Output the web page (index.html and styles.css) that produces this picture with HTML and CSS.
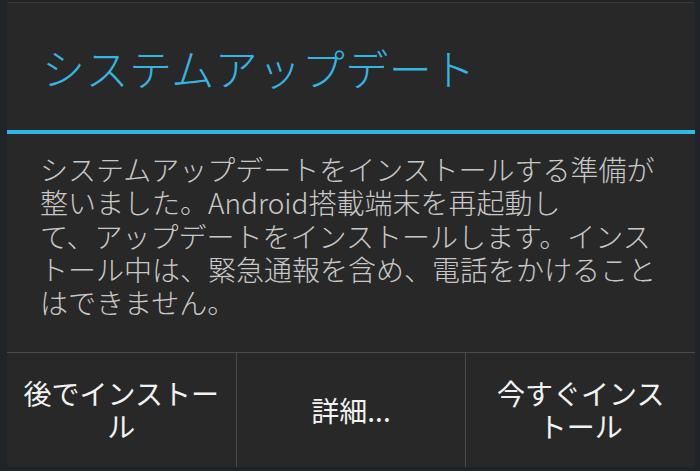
FILE: index.html
```html
<!DOCTYPE html>
<html lang="ja">
<head>
  <meta charset="UTF-8">
  <meta name="viewport" content="width=device-width, initial-scale=1.0">
  <title>システムアップデート</title>
  <link rel="stylesheet" href="styles.css">
</head>
<body>
  <div class="dialog">
    <div class="dialog-title">システムアップデート</div>
    <div class="dialog-divider"></div>
    <p class="dialog-message">システムアップデートをインストールする準備が<br>整いました。Android搭載端末を再起動し<br>て、アップデートをインストールします。インス<br>トール中は、緊急通報を含め、電話をかけること<br>はできません。</p>
    <div class="dialog-buttons">
      <button type="button">後でインストー<br>ル</button>
      <button type="button">詳細...</button>
      <button type="button">今すぐインス<br>トール</button>
    </div>
  </div>
</body>
</html>
```

FILE: styles.css
```css
html, body {
  height: 100%;
}
body {
  margin: 0;
  padding: 2px 5px 4px 7px;
  box-sizing: border-box;
  background: #1f2429;
  font-family: "Noto Sans CJK JP", "Noto Sans", sans-serif;
  overflow: hidden;
}
.dialog {
  display: flex;
  flex-direction: column;
  height: 465px;
  background: #282828;
  border-top: 1px solid #3a3a3a;
  border-radius: 3px;
  box-sizing: border-box;
}
.dialog-title {
  height: 127px;
  display: flex;
  align-items: center;
  padding-left: 35px;
  color: #33b5e5;
  font-size: 43px;
  font-weight: 300;
  letter-spacing: 0.5px;
}
.dialog-divider {
  height: 4px;
  background: #33b5e5;
}
.dialog-message {
  flex: 1;
  margin: 0;
  padding: 19px 0 0 33px;
  color: #c8c8c8;
  font-size: 28px;
  font-weight: 300;
  line-height: 33.3px;
  white-space: nowrap;
}
.dialog-buttons {
  display: flex;
  height: 114px;
  border-top: 1px solid #4a4a4a;
}
.dialog-buttons button {
  flex: 1;
  margin: 0;
  padding: 0;
  background: none;
  border: none;
  border-left: 1px solid #4a4a4a;
  color: #f2f2f2;
  font-family: inherit;
  font-size: 28px;
  line-height: 33px;
  text-align: center;
}
.dialog-buttons button:first-child {
  border-left: none;
}
```
